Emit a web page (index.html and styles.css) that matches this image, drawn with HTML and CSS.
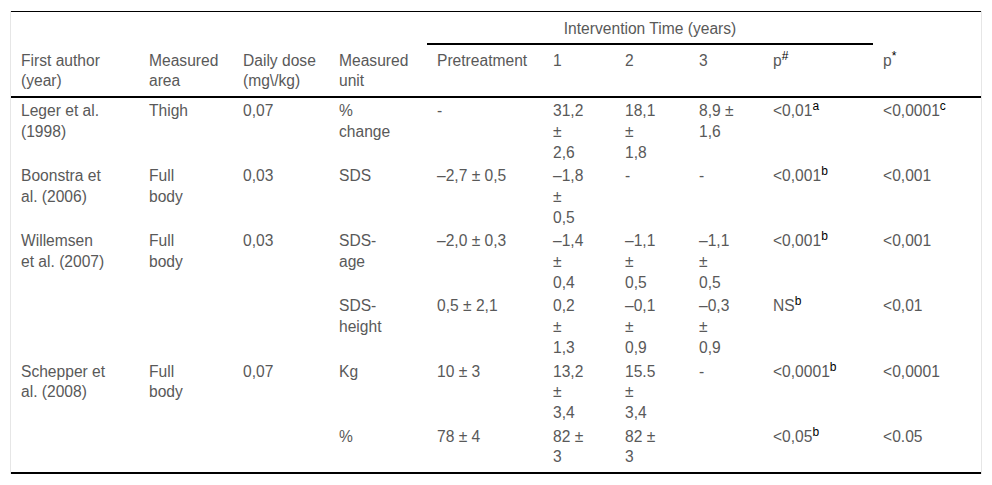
FILE: index.html
```html
<!DOCTYPE html>
<html lang="en">
<head>
<meta charset="utf-8">
<title>Table</title>
<link rel="stylesheet" href="styles.css">
</head>
<body>
<div class="wrap">
<table class="data">
<colgroup>
<col class="c1"><col class="c2"><col class="c3"><col class="c4"><col class="c5">
<col class="c6"><col class="c7"><col class="c8"><col class="c9"><col class="c10">
</colgroup>
<thead>
<tr class="h1">
<th></th><th></th><th></th><th></th>
<th colspan="5" class="span">Intervention Time (years)</th>
<th></th>
</tr>
<tr class="h2">
<th>First author<br>(year)</th>
<th>Measured<br>area</th>
<th>Daily dose<br>(mg\/kg)</th>
<th>Measured<br>unit</th>
<th>Pretreatment</th>
<th>1</th>
<th>2</th>
<th>3</th>
<th>p<sup>#</sup></th>
<th>p<sup>*</sup></th>
</tr>
</thead>
<tbody>
<tr>
<td>Leger et al.<br>(1998)</td><td>Thigh</td><td>0,07</td><td>%<br>change</td><td>-</td>
<td>31,2<br>±<br>2,6</td><td>18,1<br>±<br>1,8</td><td>8,9 ±<br>1,6</td>
<td>&lt;0,01<sup>a</sup></td><td>&lt;0,0001<sup>c</sup></td>
</tr>
<tr>
<td>Boonstra et<br>al. (2006)</td><td>Full<br>body</td><td>0,03</td><td>SDS</td><td>–2,7 ± 0,5</td>
<td>–1,8<br>±<br>0,5</td><td>-</td><td>-</td>
<td>&lt;0,001<sup>b</sup></td><td>&lt;0,001</td>
</tr>
<tr>
<td>Willemsen<br>et al. (2007)</td><td>Full<br>body</td><td>0,03</td><td>SDS-<br>age</td><td>–2,0 ± 0,3</td>
<td>–1,4<br>±<br>0,4</td><td>–1,1<br>±<br>0,5</td><td>–1,1<br>±<br>0,5</td>
<td>&lt;0,001<sup>b</sup></td><td>&lt;0,001</td>
</tr>
<tr>
<td></td><td></td><td></td><td>SDS-<br>height</td><td>0,5 ± 2,1</td>
<td>0,2<br>±<br>1,3</td><td>–0,1<br>±<br>0,9</td><td>–0,3<br>±<br>0,9</td>
<td>NS<sup>b</sup></td><td>&lt;0,01</td>
</tr>
<tr>
<td>Schepper et<br>al. (2008)</td><td>Full<br>body</td><td>0,07</td><td>Kg</td><td>10 ± 3</td>
<td>13,2<br>±<br>3,4</td><td>15.5<br>±<br>3,4</td><td>-</td>
<td>&lt;0,0001<sup>b</sup></td><td>&lt;0,0001</td>
</tr>
<tr class="last">
<td></td><td></td><td></td><td>%</td><td>78 ± 4</td>
<td>82 ±<br>3</td><td>82 ±<br>3</td><td></td>
<td>&lt;0,05<sup>b</sup></td><td>&lt;0.05</td>
</tr>
</tbody>
</table>
</div>
</body>
</html>
```

FILE: styles.css
```css
html, body {
  margin: 0;
  padding: 0;
  background: #ffffff;
}

body {
  font-family: "Liberation Sans", Arial, sans-serif;
  font-size: 15.6px;
  line-height: 20.7px;
  color: #595959;
}

.wrap {
  margin: 11px 10px 0 10px;
  border-left: 1px solid #e6e6e6;
  border-right: 1px solid #e6e6e6;
}

.data {
  width: 970px;
  table-layout: fixed;
  border-collapse: separate;
  border-spacing: 0;
  border-top: 1px solid #000;
  border-bottom: 2px solid #000;
}

.c1 { width: 128px; }
.c2 { width: 94px; }
.c3 { width: 96px; }
.c4 { width: 98px; }
.c5 { width: 116px; }
.c6 { width: 72px; }
.c7 { width: 74px; }
.c8 { width: 74px; }
.c9 { width: 110px; }
.c10 { width: 108px; }

.data th,
.data td {
  font-weight: normal;
  text-align: left;
  vertical-align: top;
  white-space: nowrap;
  padding: 0 10px;
}

.h1 th {
  padding-top: 7px;
  padding-bottom: 3px;
}

.h1 .span {
  text-align: center;
  vertical-align: middle;
  border-bottom: 2px solid #000;
}

.h2 th {
  padding-top: 6px;
  padding-bottom: 4px;
  border-bottom: 2px solid #000;
}

.data td {
  padding-top: 3px;
  padding-bottom: 0;
}

.data tr.last td {
  padding-bottom: 4px;
}

sup {
  font-size: 12px;
  line-height: 0;
  color: #000;
  vertical-align: 6px;
}
```
